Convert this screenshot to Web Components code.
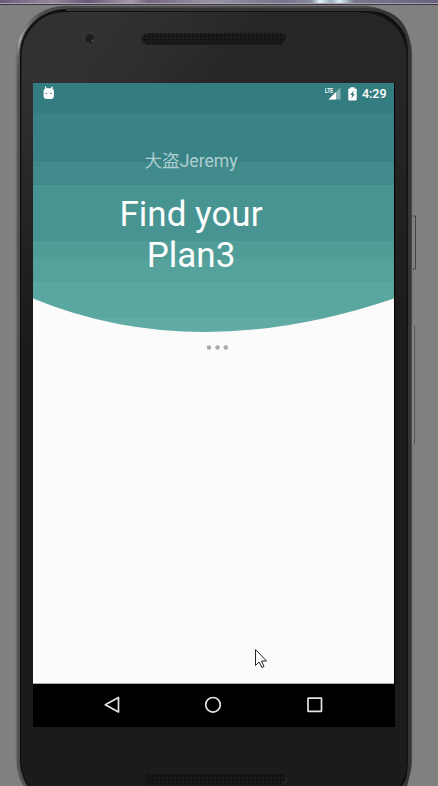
<!DOCTYPE html>
<html lang="en">
<head>
<meta charset="utf-8">
<title>Find your Plan</title>
<style>
html,body{margin:0;height:100%;overflow:hidden;background:#808080}
body{font-family:Roboto,"Noto Sans CJK SC",sans-serif}
</style>
</head>
<body>
<phone-frame>
  <status-bar slot="status">4:29</status-bar>
  <plan-header>
    <span slot="user">大盗Jeremy</span>
    <span slot="title">Find your<br>Plan3</span>
  </plan-header>
  <loading-dots></loading-dots>
  <nav-bar slot="nav"></nav-bar>
</phone-frame>
<mouse-pointer></mouse-pointer>
<script>
const define = (name, html) => customElements.define(name, class extends HTMLElement {
  constructor() {
    super();
    this.attachShadow({ mode: 'open' }).innerHTML = html;
  }
});

define('phone-frame', `
<style>
:host{display:block;position:relative;isolation:isolate;box-sizing:border-box;width:438px;height:786px;padding:83px 43px 0 33px;overflow:hidden}
.shell{position:absolute;inset:0;z-index:-1}
.screen{display:grid;grid-template-rows:601px 43px;width:362px;background:#000}
.app{position:relative;width:361px;background:#fbfbfb;box-sizing:border-box;border-bottom:1px solid #aaa}
.status{position:absolute;top:0;left:0;right:0;z-index:1}
</style>
<svg class="shell" width="438" height="786" viewBox="0 0 438 786">
  <defs>
    <linearGradient id="strip" x1="0" x2="1" y1="0" y2="0">
      <stop offset="0" stop-color="#6b5a7c"/><stop offset=".12" stop-color="#95889a"/><stop offset=".2" stop-color="#655a78"/>
      <stop offset=".3" stop-color="#a19aa5"/><stop offset=".34" stop-color="#70667f"/><stop offset=".48" stop-color="#9993a5"/>
      <stop offset=".65" stop-color="#77718a"/><stop offset=".71" stop-color="#83899b"/><stop offset=".73" stop-color="#e4f5fb"/>
      <stop offset=".755" stop-color="#9cabb9"/><stop offset=".775" stop-color="#dceef3"/><stop offset=".81" stop-color="#77778b"/><stop offset="1" stop-color="#68627c"/>
    </linearGradient>
    <linearGradient id="rim" gradientUnits="userSpaceOnUse" x1="0" x2="0" y1="6" y2="80">
      <stop offset="0" stop-color="#424242"/><stop offset=".18" stop-color="#666"/><stop offset=".45" stop-color="#aaa"/><stop offset=".7" stop-color="#626262"/><stop offset="1" stop-color="#555"/>
    </linearGradient>
    <linearGradient id="side" gradientUnits="userSpaceOnUse" x1="17" x2="50" y1="0" y2="0">
      <stop offset="0" stop-color="#fff"/><stop offset=".5" stop-color="#fff"/><stop offset="1" stop-color="#000"/>
    </linearGradient>
    <mask id="leftOnly" maskUnits="userSpaceOnUse" x="0" y="0" width="438" height="786"><rect width="438" height="786" fill="url(#side)"/></mask>
    <linearGradient id="body" gradientUnits="userSpaceOnUse" x1="98" y1="40" x2="200" y2="112">
      <stop offset="0" stop-color="#313134"/><stop offset=".4" stop-color="#2e2e30"/><stop offset="1" stop-color="#262626"/>
    </linearGradient>
    <linearGradient id="fade" x1="0" x2="0" y1="0" y2="1">
      <stop offset=".08" stop-color="#1b1b1b" stop-opacity="0"/><stop offset=".42" stop-color="#1b1b1b"/>
    </linearGradient>
    <pattern id="holes" width="4" height="4" patternUnits="userSpaceOnUse" x="144" y="35">
      <rect width="1.4" height="1.4" fill="#050505"/><rect x="2" y="2" width="1" height="1" fill="#101010"/>
    </pattern>
  </defs>
  <rect width="438" height="786" fill="#808080"/>
  <rect width="438" height="3" fill="url(#strip)"/>
  <rect y="3" width="438" height="1" fill="#aaa2b0"/>
  <rect y="4" width="438" height="1" fill="#3b3445"/>
  <rect x="15.500" y="5.500" width="397" height="804" rx="50" fill="#777"/>
  <rect x="17" y="6" width="395" height="803" rx="48" fill="#4a4a4a"/>
  <rect x="18" y="7" width="394" height="801" rx="47" fill="none" stroke="url(#rim)" stroke-width="2.500" mask="url(#leftOnly)"/>
  <rect x="20" y="9" width="390" height="798" rx="46" fill="#101010"/>
  <path d="M66 9.500H366Q409.500 9.500 409.500 55V760Q409.500 776 404 790" fill="none" stroke="#353535" stroke-width="3"/>
  <rect x="21.500" y="12" width="385.500" height="793" rx="44" fill="url(#body)"/>
  <rect x="21.500" y="12" width="385.500" height="793" rx="44" fill="url(#fade)"/>
  <path d="M359 12C389 12 407 32 407 58V764" fill="none" stroke="#151515"/>
  <path d="M394.500 83V727" stroke="#030303"/>
  <circle cx="90" cy="39" r="6.500" fill="#303031" stroke="#3a3a3b" stroke-width="1"/>
  <circle cx="89.500" cy="38.500" r="4" fill="#1d1d1e"/>
  <circle cx="92.500" cy="40.500" r="1" fill="#6d5650"/>
  <rect x="141.500" y="33" width="145" height="12" rx="6" fill="#1c1c1c"/>
  <rect x="143" y="34" width="142" height="10" rx="5" fill="url(#holes)"/>
  <path d="M282 44.500Q286.500 43 286.500 38" fill="none" stroke="#3c3c3c"/>
  <rect x="144.500" y="773.500" width="142" height="11" rx="5" fill="#181818"/>
  <rect x="145" y="774" width="140" height="10" rx="4" fill="url(#holes)"/>
  <path d="M282 784.500Q286.500 783 286.500 778" fill="none" stroke="#353535"/>
  <path d="M413 216H415.500V269H413" fill="none" stroke="#424242"/>
  <path d="M414.500 325V444" stroke="#555"/>
  <path d="M413 325V444" stroke="#8b8b8b"/>
</svg>
<div class="screen">
  <div class="app"><div class="status"><slot name="status"></slot></div><slot></slot></div>
  <slot name="nav"></slot>
</div>`);

define('status-bar', `
<style>
:host{display:flex;align-items:center;justify-content:space-between;height:22px;box-sizing:border-box;padding:0 7.500px 0 10px;color:#fff;font:500 12.500px/22px Roboto,sans-serif}
svg{display:block;overflow:visible}
.right{display:flex;align-items:center}
.sig{margin-right:7px}.bat{margin-right:5px}
.lte{font:bold 8px Roboto,sans-serif}
</style>
<svg width="12" height="14" viewBox="0 0 12 14" style="margin-top:-3px"><path d="M.6 4.500Q.6 3.500 2 3L2 .6H3L3.500 2.300H8L8.700.4H9.700V3Q10.900 3.500 10.900 4.500V10Q10.900 13 7.800 13H3.700Q.6 13 .6 10Z" fill="#fff"/><path d="M2.300 7.400H4.200M7 7.400H9" stroke="#568f94"/></svg>
<div class="right">
  <svg class="sig" width="16" height="14" viewBox="0 0 16 14"><path d="M15.500 .5V12.500H3.500Z" fill="#fff" opacity=".4"/><path d="M11 5V12.500H3.500Z" fill="#fff"/><rect x="0" y="0" width="9" height="6.500" fill="#337c80"/><g transform="translate(0 5.500) scale(.62 .95)"><text class="lte" fill="#fff">LTE</text></g></svg>
  <svg class="bat" width="9" height="14" viewBox="0 0 9 14"><path d="M1 1.500H2.500V.3H6.500V1.500H8Q8.700 1.500 8.700 2.300V12.600Q8.700 13.400 8 13.400H1Q.3 13.400 .3 12.600V2.300Q.3 1.500 1 1.500Z" fill="#fff"/><path d="M5.800 3.500L2.200 7.900H4.200L3.300 11.600L6.900 6.900H5Z" fill="#34777b"/></svg>
  <slot></slot>
</div>`);

define('plan-header', `
<style>
:host{display:block;height:250px;box-sizing:border-box;padding:66px 45px 0 0;text-align:center;position:relative;color:#fff}
svg{position:absolute;left:0;top:0}
.user,.title{position:relative}
.user{font-size:17.600px;line-height:24px;color:#b0ced0}
.title{font-size:35px;line-height:41px;margin-top:21px;color:#fcfefe}
</style>
<svg width="361" height="250" viewBox="0 0 361 250">
  <defs><clipPath id="c"><path d="M0 0H361V215.500Q163 282.500 0 215.500Z"/></clipPath></defs>
  <g clip-path="url(#c)">
    <rect width="361" height="30" fill="#337c80"/>
    <rect y="30" width="361" height="49" fill="#398387"/>
    <rect y="79" width="361" height="23" fill="#418b8d"/>
    <rect y="102" width="361" height="56" fill="#489492"/>
    <rect y="158" width="361" height="18" fill="#509d98"/>
    <rect y="176" width="361" height="23" fill="#55a19b"/>
    <rect y="199" width="361" height="36" fill="#5aa7a1"/>
    <rect y="235" width="361" height="15" fill="#61aba5"/>
    <path d="M0 81.500H361" stroke="#35797f" stroke-dasharray="2 2" opacity=".55"/>
    <path d="M0 101.500H361" stroke="#3d878b" opacity=".8"/>
  </g>
</svg>
<div class="user"><slot name="user"></slot></div>
<div class="title"><slot name="title"></slot></div>`);

define('loading-dots', `
<style>
:host{display:flex;justify-content:center;padding:12px 0 0 8px}
svg{display:block}
</style><svg width="23" height="5" fill="#a8a8a8"><circle cx="3" cy="2.500" r="2.250"/><circle cx="11.500" cy="2.500" r="2.250"/><circle cx="19.800" cy="2.500" r="2.250"/></svg>`);

define('nav-bar', `
<style>
:host{display:grid;grid-template-columns:repeat(3,101.500px);justify-content:center;align-items:center;justify-items:center;background:#000;box-sizing:border-box;padding:0 2px 2px 0}
svg{display:block;fill:none;stroke:#e2e2e2;stroke-width:1.700}
</style>
<svg width="18" height="18"><path d="M15.500 1.500V16L2.300 8.800Z" stroke-linejoin="round"/></svg>
<svg width="18" height="18"><circle cx="9" cy="8.800" r="7.300"/></svg>
<svg width="18" height="18"><rect x="2" y="2.100" width="13.500" height="13.300" rx=".5"/></svg>`);

define('mouse-pointer', `
<style>:host{position:absolute;left:254px;top:648px}svg{display:block}</style>
<svg width="14" height="21"><path d="M1.500 1.500V17.500L5 14L8 19.500L10 18.500L7.500 13H12.500Z" fill="#fff" stroke="#25252c"/></svg>`);
</script>
</body>
</html>
